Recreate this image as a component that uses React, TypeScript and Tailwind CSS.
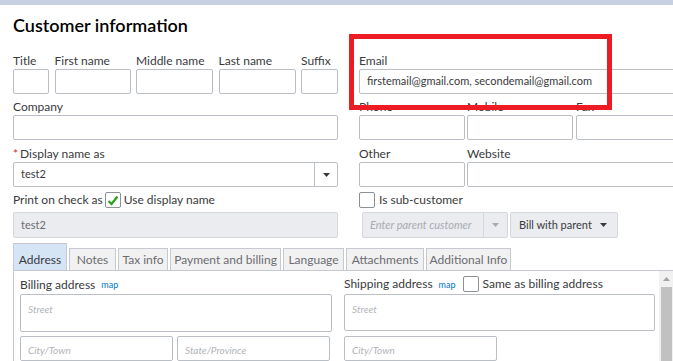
import React from "react";

const Label = ({ children, required }: { children?: React.ReactNode; required?: boolean }) => (
  <div className="h-[15px] leading-[15px] text-[12px] mb-[1px] whitespace-nowrap">
    {required && <span className="text-[#d52b1e] mr-[2px]">*</span>}
    {children}
  </div>
);

const Box = ({ className = "", children }: { className?: string; children?: React.ReactNode }) => (
  <div className={`h-[25px] border border-[#babec5] rounded-[2px] bg-white ${className}`}>{children}</div>
);

const Field = ({ label, className = "", children }: { label: string; className?: string; children?: React.ReactNode }) => (
  <div className={className}>
    <Label>{label}</Label>
    <Box>{children}</Box>
  </div>
);

const Caret = () => (
  <svg width="7" height="4" viewBox="0 0 7 4">
    <path d="M0 0 H7 L3.5 4 Z" fill="currentColor" />
  </svg>
);

const Tab = ({ label, w, active }: { label: string; w: string; active?: boolean }) => (
  <div
    className={
      active
        ? `${w} h-[27px] border border-b-0 border-[#c6cad0] bg-[#d5e5f5] text-[#393a3d] text-[12px] flex items-center justify-center pt-[5px] whitespace-nowrap`
        : `${w} h-[22px] border border-b-0 border-[#c6cad0] bg-[#f1f1f1] text-[#6b6c72] text-[12px] flex items-center justify-center whitespace-nowrap`
    }
  >
    {label}
  </div>
);

export default function App() {
  return (
    <div className="w-[673px] h-[361px] overflow-hidden bg-white relative font-['Lato',sans-serif] text-[#393a3d]">
      <div className="h-[5px] bg-[#c8d1e1]" />
      <h1 className="px-[13px] pt-[8px] text-[18px] font-semibold leading-[24px] text-black">Customer information</h1>

      <div className="flex px-[13px] mt-[16px] gap-[21px]">
        {/* left column */}
        <div className="w-[325px] shrink-0 flex flex-col">
          <div className="flex justify-between">
            <Field label="Title" className="w-[36px]" />
            <Field label="First name" className="w-[76px]" />
            <Field label="Middle name" className="w-[77px]" />
            <Field label="Last name" className="w-[77px]" />
            <Field label="Suffix" className="w-[37px]" />
          </div>
          <Field label="Company" className="mt-[5px]" />
          <div className="mt-[6px]">
            <Label required>Display name as</Label>
            <Box className="flex items-center">
              <span className="flex-1 pl-[7px] text-[11px]">test2</span>
              <span className="w-[23px] h-full border-l border-[#babec5] flex items-center justify-center text-[#393a3d]">
                <Caret />
              </span>
            </Box>
          </div>
          <div className="h-[20px] flex items-center text-[12px] mt-[3px]">
            <span>Print on check as</span>
            <span className="ml-[2px] w-[16px] h-[16px] border border-[#8d9096] rounded-[2px] flex items-center justify-center bg-white">
              <svg width="12" height="11" viewBox="0 0 12 11">
                <path d="M1.5 6 L4.5 9 L10.5 1.5" stroke="#2ca01c" strokeWidth="2.2" fill="none" />
              </svg>
            </span>
            <span className="ml-[3px] text-[#393a3d]">Use display name</span>
          </div>
          <div className="mt-[2px] h-[26px] rounded-[2px] border border-[#d4d7dc] bg-[#ebecef] flex items-center pl-[7px] text-[11px] text-[#6b6c72]">
            test2
          </div>
        </div>

        {/* right column */}
        <div className="w-[325px] shrink-0 flex flex-col">
          <div>
            <Label>Email</Label>
            <Box className="flex items-center pl-[7px] text-[11px] whitespace-nowrap">
              firstemail@gmail.com, secondemail@gmail.com
            </Box>
          </div>
          <div className="flex mt-[5px]">
            <Field label="Phone" className="w-[106px]" />
            <Field label="Mobile" className="w-[106px] ml-[2px]" />
            <Field label="Fax" className="w-[108px] ml-[3px]" />
          </div>
          <div className="flex mt-[6px]">
            <Field label="Other" className="w-[106px]" />
            <Field label="Website" className="flex-1 ml-[2px]" />
          </div>
          <div className="h-[20px] flex items-center text-[12px] mt-[3px]">
            <span className="w-[16px] h-[16px] border border-[#8d9096] rounded-[2px] bg-white" />
            <span className="ml-[4px]">Is sub-customer</span>
          </div>
          <div className="flex mt-[2px] ml-[3px] gap-[2px]">
            <div className="w-[146px] h-[26px] rounded-[2px] border border-[#d4d7dc] bg-[#ebecef] flex items-center">
              <span className="flex-1 pl-[7px] text-[11px] italic text-[#a8abb1] whitespace-nowrap">Enter parent customer</span>
              <span className="w-[24px] h-full border-l border-[#d4d7dc] flex items-center justify-center text-[#a8abb1]">
                <Caret />
              </span>
            </div>
            <div className="w-[108px] h-[26px] rounded-[2px] border border-[#d4d7dc] bg-[#ebecef] flex items-center justify-between pl-[8px] pr-[10px] text-[11px]">
              <span>Bill with parent</span>
              <Caret />
            </div>
          </div>
        </div>
      </div>

      {/* tabs */}
      <div className="flex items-end px-[13px] mt-[5px] gap-[2px]">
        <Tab label="Address" w="w-[54px]" active />
        <Tab label="Notes" w="w-[47px]" />
        <Tab label="Tax info" w="w-[50px]" />
        <Tab label="Payment and billing" w="w-[111px]" />
        <Tab label="Language" w="w-[61px]" />
        <Tab label="Attachments" w="w-[78px]" />
        <Tab label="Additional Info" w="w-[85px]" />
      </div>

      <div className="ml-[13px] border-t border-l border-[#c6cad0] flex h-[91px]">
        <div className="flex-1 flex pl-[6px] gap-[12px]">
          <div className="w-[312px] flex flex-col">
            <div className="h-[25px] flex items-center text-[12px] pt-[5px]">
              <span>Billing address</span>
              <span className="ml-[6px] text-[9px] text-[#0077c5]">map</span>
            </div>
            <div className="h-[40px] border border-[#babec5] rounded-[2px] pl-[7px] pt-[7px] text-[10px] italic text-[#b0b3b8]">Street</div>
            <div className="flex gap-[4px] mt-[4px]">
              <div className="w-[153px] h-[25px] border border-[#babec5] rounded-[2px] pl-[7px] pt-[6px] text-[10px] italic text-[#b0b3b8]">City/Town</div>
              <div className="w-[153px] h-[25px] border border-[#babec5] rounded-[2px] pl-[7px] pt-[6px] text-[10px] italic text-[#b0b3b8]">State/Province</div>
            </div>
          </div>
          <div className="w-[311px] flex flex-col">
            <div className="h-[25px] flex items-center text-[12px] pt-[4px]">
              <span>Shipping address</span>
              <span className="ml-[6px] text-[9px] text-[#0077c5]">map</span>
              <span className="ml-[7px] w-[16px] h-[16px] border border-[#8d9096] rounded-[2px] bg-white" />
              <span className="ml-[4px]">Same as billing address</span>
            </div>
            <div className="h-[40px] border border-[#babec5] rounded-[2px] pl-[7px] pt-[7px] text-[10px] italic text-[#b0b3b8]">Street</div>
            <div className="flex mt-[5px]">
              <div className="w-[153px] h-[25px] border border-[#babec5] rounded-[2px] pl-[7px] pt-[6px] text-[10px] italic text-[#b0b3b8]">City/Town</div>
            </div>
          </div>
        </div>
        <div className="w-[14px] bg-[#f1f1f1] flex flex-col items-center">
          <div className="h-[16px] flex items-center justify-center text-[#a3a3a3]">
            <svg width="7" height="4" viewBox="0 0 7 4">
              <path d="M0 4 H7 L3.5 0 Z" fill="currentColor" />
            </svg>
          </div>
          <div className="w-[11px] flex-1 bg-[#c1c1c1]" />
        </div>
      </div>

      {/* annotation */}
      <div className="absolute left-[349px] top-[34px] w-[263px] h-[76px] border-[5px] border-[#ed1c24]" />
    </div>
  );
}
